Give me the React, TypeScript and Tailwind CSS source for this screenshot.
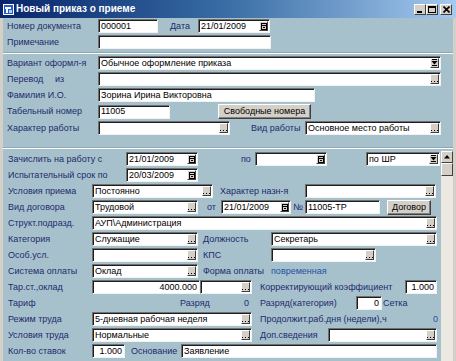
import React from "react";

type P = { className?: string; children?: React.ReactNode };

const Lbl = ({ className = "", children }: P) => (
  <span className={`shrink-0 whitespace-nowrap text-[9px] leading-none text-[#1d2a6c] ${className}`}>{children}</span>
);

const Ell = () => (
  <span className="shrink-0 h-[10px] w-[9px] bg-[#d4d0c8] border border-t-white border-l-white border-r-[#404040] border-b-[#404040] flex items-end justify-center pb-[1px]">
    <svg width="7" height="1" viewBox="0 0 7 1">
      <rect x="0" y="0" width="1" height="1" fill="#000" />
      <rect x="3" y="0" width="1" height="1" fill="#000" />
      <rect x="6" y="0" width="1" height="1" fill="#000" />
    </svg>
  </span>
);

const Drop = () => (
  <span className="shrink-0 h-[10px] w-[9px] bg-[#d4d0c8] border border-t-white border-l-white border-r-[#404040] border-b-[#404040] flex items-center justify-center">
    <svg width="7" height="8" viewBox="0 0 7 8">
      <rect x="1" y="0" width="5" height="1" fill="#000" />
      <polygon points="0.5,2 6.5,2 3.5,5.5" fill="#000" />
      <rect x="1" y="6" width="5" height="1" fill="#000" />
    </svg>
  </span>
);

const Cal = () => (
  <span className="shrink-0 h-[10px] w-[9px] bg-[#d4d0c8] border border-t-white border-l-white border-r-[#404040] border-b-[#404040] flex items-center justify-center">
    <svg width="6" height="7" viewBox="0 0 6 7">
      <rect x="0.5" y="0.5" width="5" height="6" fill="none" stroke="#000" strokeWidth="1" />
      <rect x="0" y="2" width="6" height="1" fill="#000" />
      <rect x="2" y="4" width="2" height="1" fill="#000" />
    </svg>
  </span>
);

const Field = ({
  className = "",
  children,
  btn,
  right,
}: P & { btn?: "ell" | "drop" | "cal"; right?: boolean }) => (
  <div
    className={`shrink-0 flex items-center h-[14px] bg-white border border-t-[#707070] border-l-[#707070] border-r-[#f2f2f2] border-b-[#f2f2f2] shadow-[inset_1px_1px_0_#1e1e1e] pl-[2px] pr-[1px] ${className}`}
  >
    <span
      className={`flex-1 min-w-0 overflow-hidden whitespace-nowrap text-[9px] leading-none text-black ${
        right ? "text-right pr-[1px]" : ""
      }`}
    >
      {children}
    </span>
    {btn === "ell" && <Ell />}
    {btn === "drop" && <Drop />}
    {btn === "cal" && <Cal />}
  </div>
);

const PushBtn = ({ className = "", children }: P) => (
  <div
    className={`shrink-0 h-[15px] bg-[#d4d0c8] border border-t-white border-l-white border-r-[#404040] border-b-[#404040] shadow-[inset_-1px_-1px_0_#808080] text-[9px] leading-none text-black flex items-center justify-center whitespace-nowrap ${className}`}
  >
    {children}
  </div>
);

const Row = ({ className = "", children }: P) => (
  <div className={`flex items-center h-[14px] ${className}`}>{children}</div>
);

const TitleBtn = ({ children, className = "" }: P) => (
  <div
    className={`w-[12px] h-[11px] bg-[#d4d0c8] border border-t-white border-l-white border-r-[#404040] border-b-[#404040] flex items-center justify-center ${className}`}
  >
    {children}
  </div>
);

export default function App() {
  return (
    <div className="w-[456px] h-[361px] overflow-hidden flex flex-col font-['Liberation_Sans',Arial,sans-serif] bg-[#d4d0c8]">
      {/* Title bar */}
      <div className="h-[18px] shrink-0 flex items-center bg-linear-to-r from-[#0a246a] via-[#3a6ea5] to-[#a6caf0] pl-[3px] pr-[4px]">
        <svg width="11" height="11" viewBox="0 0 11 11" className="shrink-0">
          <rect x="0" y="0" width="11" height="11" fill="#ffffff" />
          <rect x="1" y="1" width="9" height="9" fill="#2a5bc9" />
          <polygon points="2,3 8,3 8,5 5,5 5,9 3,9 3,5 2,5" fill="#ffffff" />
          <rect x="6" y="6" width="3" height="3" fill="#9fd0ff" />
        </svg>
        <span className="ml-[2px] text-[10px] font-bold text-white leading-none whitespace-nowrap">Новый приказ о приеме</span>
        <div className="ml-auto flex items-center">
          <TitleBtn>
            <svg width="6" height="7" viewBox="0 0 6 7">
              <rect x="0" y="5" width="5" height="2" fill="#000" />
            </svg>
          </TitleBtn>
          <TitleBtn>
            <svg width="8" height="7" viewBox="0 0 8 7">
              <rect x="0.5" y="0.5" width="7" height="6" fill="none" stroke="#000" />
              <rect x="0" y="0" width="8" height="2" fill="#000" />
            </svg>
          </TitleBtn>
          <TitleBtn className="ml-[2px]">
            <svg width="7" height="7" viewBox="0 0 7 7">
              <path d="M0.5 0.5 L6.5 6.5 M6.5 0.5 L0.5 6.5" stroke="#000" strokeWidth="1.6" />
            </svg>
          </TitleBtn>
        </div>
      </div>

      {/* Body */}
      <div className="flex-1 min-h-0 flex flex-col bg-[#a7c1cc] border-l-[3px] border-r-[3px] border-[#d4d0c8]">
        {/* Top section */}
        <div className="flex flex-col pt-[1px]">
          <Row className="pl-[4px]">
            <Lbl className="w-[91px]">Номер документа</Lbl>
            <Field className="w-[60px]">000001</Field>
            <Lbl className="ml-[12px] w-[28px]">Дата</Lbl>
            <Field className="w-[72px]" btn="cal">21/01/2009</Field>
          </Row>
          <Row className="pl-[4px] mt-[2px]">
            <Lbl className="w-[91px]">Примечание</Lbl>
            <Field className="w-[173px]" />
          </Row>
          <div className="mt-[3px] h-px bg-[#8ea7b3]" />
          <div className="h-px bg-white" />
          <Row className="pl-[4px] mt-[2px]">
            <Lbl className="w-[91px]">Вариант оформл-я</Lbl>
            <Field className="w-[343px]" btn="drop">Обычное оформление приказа</Field>
          </Row>
          <Row className="pl-[4px] mt-[2px]">
            <Lbl className="w-[48px]">Перевод</Lbl>
            <Lbl className="w-[43px]">из</Lbl>
            <Field className="w-[343px]" btn="ell" />
          </Row>
          <Row className="pl-[4px] mt-[2px]">
            <Lbl className="w-[91px]">Фамилия И.О.</Lbl>
            <Field className="w-[217px]">Зорина Ирина Викторовна</Field>
          </Row>
          <div className="flex items-center h-[15px] pl-[4px] mt-[2px]">
            <Lbl className="w-[91px]">Табельный номер</Lbl>
            <Field className="w-[72px]">11005</Field>
            <PushBtn className="ml-[48px] w-[93px]">Свободные номера</PushBtn>
          </div>
          <Row className="pl-[4px] mt-[2px]">
            <Lbl className="w-[91px]">Характер работы</Lbl>
            <Field className="w-[132px]" btn="ell" />
            <Lbl className="ml-[21px] w-[54px]">Вид работы</Lbl>
            <Field className="w-[136px]" btn="ell">Основное место работы</Field>
          </Row>
          <div className="mt-[12px] h-px bg-[#8ea7b3]" />
          <div className="h-px bg-white" />
        </div>

        {/* Scrolling lower section */}
        <div className="flex-1 min-h-0 flex">
          <div className="flex-1 min-w-0 flex flex-col gap-[2px] pt-[3px] pl-[5px]">
            <Row>
              <Lbl className="w-[118px]">Зачислить на работу с</Lbl>
              <Field className="w-[72px]" btn="cal">21/01/2009</Field>
              <Lbl className="ml-[43px] w-[14px]">по</Lbl>
              <Field className="w-[72px]" btn="cal" />
              <Field className="ml-[39px] w-[74px]" btn="drop">по ШР</Field>
            </Row>
            <Row>
              <Lbl className="w-[118px]">Испытательный срок по</Lbl>
              <Field className="w-[72px]" btn="cal">20/03/2009</Field>
            </Row>
            <Row>
              <Lbl className="w-[84px]">Условия приема</Lbl>
              <Field className="w-[121px]" btn="ell">Постоянно</Field>
              <Lbl className="ml-[7px] w-[85px]">Характер назн-я</Lbl>
              <Field className="w-[131px]" btn="ell" />
            </Row>
            <Row>
              <Lbl className="w-[84px]">Вид договора</Lbl>
              <Field className="w-[106px]" btn="ell">Трудовой</Field>
              <Lbl className="ml-[9px] w-[14px]">от</Lbl>
              <Field className="w-[70px]" btn="cal">21/01/2009</Field>
              <Lbl className="ml-[2px] w-[12px]">№</Lbl>
              <Field className="w-[75px]">11005-ТР</Field>
              <PushBtn className="ml-[7px] w-[44px]">Договор</PushBtn>
            </Row>
            <Row>
              <Lbl className="w-[84px]">Структ.подразд.</Lbl>
              <Field className="w-[345px]" btn="ell">АУП\Администрация</Field>
            </Row>
            <Row>
              <Lbl className="w-[84px]">Категория</Lbl>
              <Field className="w-[106px]" btn="ell">Служащие</Field>
              <Lbl className="ml-[5px] w-[68px]">Должность</Lbl>
              <Field className="w-[166px]" btn="ell">Секретарь</Field>
            </Row>
            <Row>
              <Lbl className="w-[84px]">Особ.усл.</Lbl>
              <Field className="w-[106px]" btn="ell" />
              <Lbl className="ml-[5px] w-[68px]">КПС</Lbl>
              <Field className="w-[105px]" btn="ell" />
            </Row>
            <Row>
              <Lbl className="w-[84px]">Система оплаты</Lbl>
              <Field className="w-[106px]" btn="ell">Оклад</Field>
              <Lbl className="ml-[5px] w-[68px]">Форма оплаты</Lbl>
              <span className="text-[9px] leading-none text-[#2450a4] whitespace-nowrap">повременная</span>
            </Row>
            <Row>
              <Lbl className="w-[84px]">Тар.ст.,оклад</Lbl>
              <Field className="w-[108px]" right>4000.000</Field>
              <Field className="w-[52px]" btn="ell" />
              <Lbl className="ml-[8px] w-[145px]">Корректирующий коэффициент</Lbl>
              <Field className="w-[32px]" right>1.000</Field>
            </Row>
            <Row>
              <Lbl className="w-[172px]">Тариф</Lbl>
              <Lbl className="w-[64px]">Разряд</Lbl>
              <Lbl className="w-[8px]">0</Lbl>
              <Lbl className="ml-[8px] w-[96px]">Разряд(категория)</Lbl>
              <Field className="w-[26px]" right>0</Field>
              <Lbl className="ml-[1px]">Сетка</Lbl>
            </Row>
            <Row>
              <Lbl className="w-[84px]">Режим труда</Lbl>
              <Field className="w-[160px]" btn="ell">5-дневная рабочая неделя</Field>
              <Lbl className="ml-[8px] w-[173px]">Продолжит.раб.дня (недели),ч</Lbl>
              <span className="text-[9px] leading-none text-[#2450a4]">0</span>
            </Row>
            <Row>
              <Lbl className="w-[84px]">Условия труда</Lbl>
              <Field className="w-[160px]" btn="ell">Нормальные</Field>
              <Lbl className="ml-[8px] w-[68px]">Доп.сведения</Lbl>
              <Field className="w-[109px]" btn="ell" />
            </Row>
            <Row>
              <Lbl className="w-[84px]">Кол-во ставок</Lbl>
              <Field className="w-[33px]" right>1.000</Field>
              <Lbl className="ml-[6px] w-[50px]">Основание</Lbl>
              <Field className="w-[256px]">Заявление</Field>
            </Row>
          </div>
          {/* Scrollbar */}
          <div className="w-[12px] shrink-0 mt-[2px] flex flex-col bg-[#ece9e2]">
            <div className="h-[12px] bg-[#d4d0c8] border border-t-white border-l-white border-r-[#404040] border-b-[#404040] flex items-center justify-center">
              <svg width="6" height="4" viewBox="0 0 6 4">
                <polygon points="3,0 6,3.5 0,3.5" fill="#000" />
              </svg>
            </div>
            <div className="h-[13px] bg-[#d4d0c8] border border-t-white border-l-white border-r-[#404040] border-b-[#404040]" />
          </div>
        </div>
      </div>
    </div>
  );
}
